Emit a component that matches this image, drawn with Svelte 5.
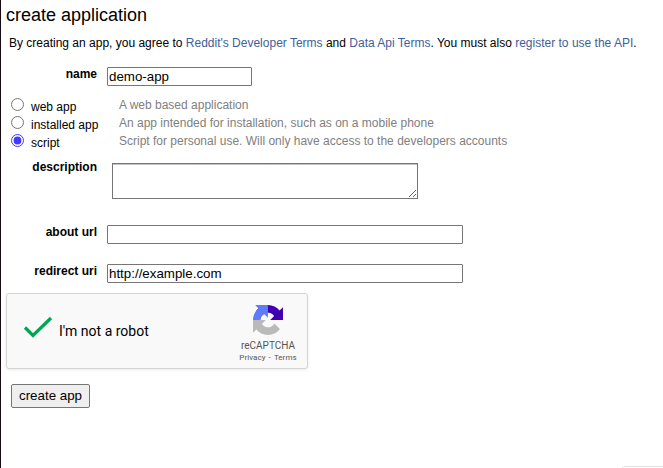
<script>
  let name = $state('demo-app');
  let kind = $state('script');
  let description = $state('');
  let about = $state('');
  let redirect = $state('http://example.com');

  const kinds = [
    { id: 'web', label: 'web app', info: 'A web based application' },
    { id: 'installed', label: 'installed app', info: 'An app intended for installation, such as on a mobile phone' },
    { id: 'script', label: 'script', info: 'Script for personal use. Will only have access to the developers accounts' }
  ];
</script>

<main>
  <h1>create application</h1>
  <p class="terms">By creating an app, you agree to <a href="#terms">Reddit's Developer Terms</a> and <a href="#data">Data Api Terms</a>. You must also <a href="#register">register to use the API</a>.</p>

  <form onsubmit={(e) => e.preventDefault()}>
    <div class="row">
      <label for="name">name</label>
      <input id="name" class="text short" type="text" bind:value={name} />
    </div>

    <div class="kinds">
      {#each kinds as k}
        <div class="kind">
          <input type="radio" id={k.id} value={k.id} bind:group={kind} />
          <label for={k.id}>{k.label}</label>
          <span>{k.info}</span>
        </div>
      {/each}
    </div>

    <div class="row desc">
      <label for="description">description</label>
      <textarea id="description" bind:value={description}></textarea>
    </div>
    <div class="row about">
      <label for="about">about url</label>
      <input id="about" class="text" type="text" bind:value={about} />
    </div>
    <div class="row redirect">
      <label for="redirect">redirect uri</label>
      <input id="redirect" class="text" type="text" bind:value={redirect} />
    </div>

    <div class="captcha">
      <svg class="check" width="30" height="24" viewBox="0 0 30 24" fill="none" stroke="#00a651" stroke-width="3.2">
        <path d="M2 11.5 L10 19.5 L28 2" />
      </svg>
      <span class="robot">I'm not a robot</span>
      <div class="brand">
        <svg width="30" height="30" viewBox="0 0 64 64">
          <path fill="#4000b0" d="M64 31.955l-.033-1.37V4.687l-7.16 7.16C50.948 4.674 42.033.093 32.05.093c-10.4 0-19.622 4.96-25.458 12.64l11.736 11.86a15.55 15.55 0 0 1 4.754-5.334c2.05-1.6 4.952-2.906 8.968-2.906.485 0 .86.057 1.135.163 4.976.393 9.288 3.14 11.828 7.124l-8.307 8.307L64 31.953" />
          <path fill="#5f7cf8" d="M31.862.094l-1.37.033H4.594l7.16 7.16C4.58 13.147 0 22.06 0 32.046L16.26 32.046c0-.485.057-.86.163-1.135.393-4.976 3.14-9.288 7.124-11.828l8.307 8.307L31.86.095" />
          <path fill="#bababa" d="M.001 32.045l.033 1.37v25.898l7.16-7.16c5.86 7.173 14.774 11.754 24.76 11.754 10.4 0 19.622-4.96 25.458-12.64l-11.736-11.86a15.55 15.55 0 0 1-4.754 5.334c-2.05 1.6-4.952 2.906-8.968 2.906-.485 0-.86-.057-1.135-.163-4.976-.393-9.288-3.14-11.828-7.124l8.307-8.307c-10.522.04-22.4.066-27.295-.005" />
        </svg>
        <div class="title">reCAPTCHA</div>
        <div class="links">Privacy<span>-</span>Terms</div>
      </div>
    </div>

    <button type="submit">create app</button>
  </form>
  <div class="corner"></div>
</main>

<style>
  :global(body) { margin: 0; background: #fff; overflow: hidden; }
  main {
    position: relative;
    box-sizing: border-box;
    width: 663px;
    height: 468px;
    padding-left: 5px;
    border-left: 1px solid #180c14;
    overflow: hidden;
    background: #fff;
    color: #000;
    font: 12px/18px "Liberation Sans", Arial, sans-serif;
  }
  h1 { margin: 0; padding-top: 4px; font-size: 18px; font-weight: 400; line-height: 22px; }
  .terms { margin: 8px 0 15px 3px; white-space: nowrap; }
  a { color: #406099; text-decoration: none; }
  .row { display: flex; align-items: flex-start; height: 28px; }
  .row label { width: 91px; margin-right: 10px; text-align: right; font-weight: 700; line-height: 14px; }
  .text {
    box-sizing: border-box;
    width: 356px;
    height: 19px;
    margin: 0;
    padding: 1px;
    border: 1px solid #767676;
    border-radius: 1px;
    outline: none;
    background: #fff;
    color: #000;
    font: 13.333px "Liberation Sans", Arial, sans-serif;
  }
  .text.short { width: 145px; }
  .kinds { padding-left: 5px; }
  .kind { display: flex; height: 18px; }
  .kind input { width: 13px; height: 13px; margin: 3px 7px 0 0; accent-color: #4338ff; }
  .kind label { width: 88px; padding-top: 3px; }
  .kind span { padding-top: 1px; color: #808080; }
  .desc { height: 65px; padding-top: 14px; box-sizing: border-box; }
  .desc label { margin-top: -3px; }
  textarea {
    box-sizing: border-box;
    width: 306px;
    height: 36px;
    margin: 0 0 0 5px;
    padding: 2px;
    border: 1px solid #767676;
    border-radius: 0;
    box-shadow: inset 0 1px #c4c4c4;
    outline: none;
    background: #fff;
    resize: both;
  }
  .about { height: 39px; padding-top: 11px; box-sizing: border-box; }
  .redirect { height: 40px; padding-top: 11px; box-sizing: border-box; }
  .captcha {
    box-sizing: border-box;
    display: flex;
    align-items: flex-start;
    width: 302px;
    height: 76px;
    border: 1px solid #d3d3d3;
    border-radius: 3px;
    box-shadow: 0 1px 3px rgba(0, 0, 0, .08);
    background: #f9f9f9;
    font-family: Roboto, sans-serif;
  }
  .check { margin: 22px 0 0 16px; }
  .robot { width: 178px; margin: 28px 0 0 6px; font-size: 14px; line-height: 18px; }
  .brand { display: flex; flex-direction: column; align-items: center; width: 62px; margin-top: 11px; color: #555; }
  .brand svg { display: block; }
  .title { margin-top: 4px; font-size: 10px; line-height: 13px; }
  .links { display: flex; gap: 3px; margin-top: 1px; font-size: 8px; line-height: 10px; letter-spacing: .06px; }
  button {
    display: block;
    box-sizing: border-box;
    width: 79px;
    height: 24px;
    margin: 15px 0 0 5px;
    padding: 0 0 2px;
    border: 1px solid #767676;
    border-radius: 2px;
    background: #efefef;
    color: #000;
    font: 13.333px "Liberation Sans", Arial, sans-serif;
  }
  .corner {
    position: absolute;
    right: -4px;
    bottom: -9px;
    width: 44px;
    height: 9px;
    border: 1px solid #e2e2e2;
    border-radius: 4px;
  }
</style>
